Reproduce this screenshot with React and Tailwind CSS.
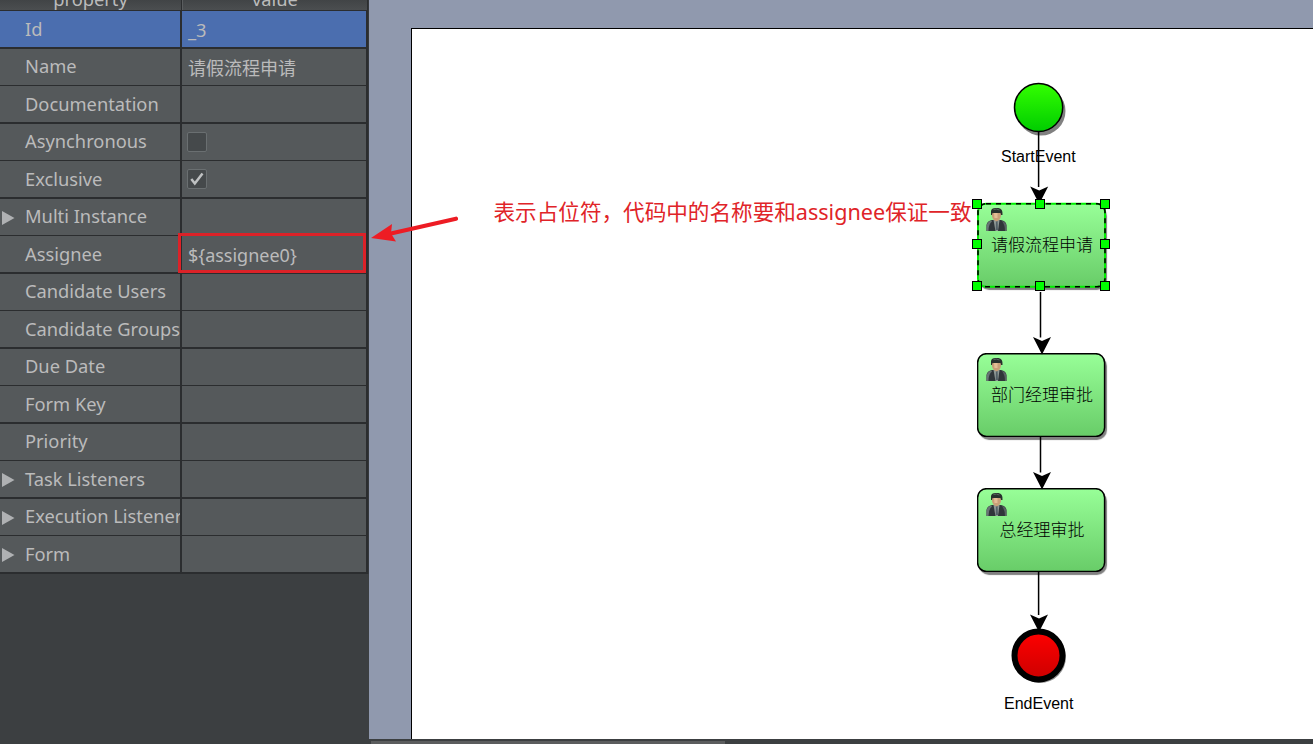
import React from "react";

const rows = [
  { label: "Id", value: "_3", selected: true },
  { label: "Name", value: "请假流程申请", cls: "text-[18px] pt-[3px] pl-[6px]" },
  { label: "Documentation" },
  { label: "Asynchronous", check: "off" },
  { label: "Exclusive", check: "on" },
  { label: "Multi Instance", expandable: true },
  { label: "Assignee", value: "${assignee0}", cls: "text-[18px] pt-[2px] pl-[6px]" },
  { label: "Candidate Users" },
  { label: "Candidate Groups" },
  { label: "Due Date" },
  { label: "Form Key" },
  { label: "Priority" },
  { label: "Task Listeners", expandable: true },
  { label: "Execution Listeners", expandable: true },
  { label: "Form", expandable: true },
];

function Check({ on }) {
  return (
    <span className="-ml-px flex h-5 w-5 items-center justify-center rounded-[2px] border border-[#6a6f71] bg-[#45494b]">
      {on && (
        <svg width="18" height="18" viewBox="0 0 18 18">
          <path d="M3.3 9 L6.8 13.5 L14.5 3.5" fill="none" stroke="#bfc1c2" strokeWidth="2.5" />
        </svg>
      )}
    </span>
  );
}

function Row({ row, index }) {
  const even = index % 2 === 0;
  const bg = row.selected ? "bg-[#4b6eaf]" : "bg-[#55595b]";
  const height = even ? "h-[38px] border-b-2" : "h-[37px] border-b";
  const valueCls = row.cls || (row.check ? (even ? "pb-px pl-[6px]" : "pb-px pl-[6px]") : "pt-[2px] pl-[6px]");
  return (
    <div className={`flex w-[366px] shrink-0 border-[#2b2d2f] ${bg} ${height}`}>
      <div
        className={`flex w-[182px] shrink-0 items-center overflow-hidden border-r-2 border-[#2b2d2f] ${
          even ? "pt-px" : "pb-px"
        }`}
      >
        <span className={`flex w-[25px] shrink-0 pl-[2px] ${even ? "pt-px" : "pt-[3px]"}`}>
          {row.expandable && (
            <svg width="13" height="14" viewBox="0 0 13 14">
              <path d="M0 0 L12.5 7 L0 14 Z" fill="#afb1b3" />
            </svg>
          )}
        </span>
        <span className="mb-[2px] whitespace-nowrap">{row.label}</span>
      </div>
      <div className={`flex flex-1 items-center ${valueCls}`}>
        {row.value && <span className="whitespace-nowrap">{row.value}</span>}
        {row.check && <Check on={row.check === "on"} />}
      </div>
    </div>
  );
}

function PropertyTable() {
  return (
    <div className="flex h-[744px] w-[369px] shrink-0 flex-col bg-[#3c3f41] font-['Noto_Sans','Noto_Sans_CJK_SC',sans-serif] text-[18.3px] text-[#bbbbbb]">
      <div className="flex h-[574px] flex-col border-r border-[#35383b] bg-[#2b2d2f]">
        <div className="flex h-[11px] w-[367px] shrink-0 items-end overflow-hidden border-b border-[#2b2d2f] bg-linear-to-b from-[#414446] to-[#4b4e50] leading-[22px]">
          <div className="flex w-[182px] justify-center border-r border-[#2b2d2f]">property</div>
          <div className="flex flex-1 justify-center border-l border-[#5a5d5f]">value</div>
        </div>
        {rows.map((row, i) => (
          <Row key={row.label} row={row} index={i} />
        ))}
      </div>
    </div>
  );
}

function UserIcon({ position }) {
  return (
    <svg className={`absolute ${position}`} width="22" height="25" viewBox="0 0 22 25">
      <path d="M0.5 24 V18 Q1 14 6 13 L15 13 Q20 14 20.5 18 V24 Z" fill="#30363a" />
      <path d="M0.5 20 Q0.5 15 5 13.5 L6 14.5 Q2.5 17 2.5 24 H0.5 Z" fill="#697475" />
      <path d="M16 14 Q20.5 15 20.5 20 V24 H19 Q19 18 16 14 Z" fill="#596263" />
      <path d="M7.5 13 H13.5 L12 24 H9.5 Z" fill="#8f9895" />
      <path d="M10 14 H11.5 L12 23 H9.7 Z" fill="#536067" />
      <path d="M6 6 H15 V9 Q14.5 13 10.5 14.5 Q6.5 13 6 9 Z" fill="#c99f78" />
      <path d="M8 6 H11.5 V11 H8.5 Z" fill="#e4bd95" />
      <path d="M5 8 V4 Q5.5 1 9.5 1 H12.5 Q17 1.5 16.5 8 L15 8 L14.5 6 H6.5 L6 8 Z" fill="#27302d" />
      <path d="M7.5 2.5 Q10.5 1.5 13.5 3" stroke="#59645d" fill="none" />
    </svg>
  );
}

function Task({ label, position, selected }) {
  return (
    <div
      className={`absolute left-[977px] flex h-[84px] w-[128px] items-center justify-center rounded-[10px] bg-linear-to-b from-[#98ff98] to-[#68cc68] pb-[3px] shadow-[2px_3px_1px_#808080] ${position}`}
    >
      {!selected && (
        <svg className="absolute inset-0" width="129" height="84">
          <rect x="0.6" y="0.7" width="127" height="82.8" rx="9" fill="none" stroke="#000" strokeWidth="1.5" />
        </svg>
      )}
      <UserIcon position="left-[9px] top-[4px]" />
      <span className="whitespace-nowrap pl-[2px] font-['Noto_Sans_CJK_SC',sans-serif] text-[17px] font-light leading-none text-black">
        {label}
      </span>
    </div>
  );
}

function Selection() {
  const points = [
    [977, 204], [1040, 204], [1105, 204],
    [977, 244], [1105, 244],
    [977, 286], [1040, 286], [1105, 286],
  ];
  return (
    <g>
      <rect x="978" y="203.7" width="127" height="83" rx="8" fill="none" stroke="#00f000" strokeWidth="2" />
      <rect x="978" y="203.7" width="127" height="83" rx="8" fill="none" stroke="#000" strokeWidth="1.6" strokeDasharray="5 5" />
      {points.map(([x, y]) => (
        <rect key={`${x}-${y}`} x={x - 4.5} y={y - 4.5} width="9" height="9" fill="#00ff00" stroke="#000" />
      ))}
    </g>
  );
}

function Arrow({ x, tipX, y1, y2 }) {
  return (
    <g>
      <path d={`M${x} ${y1} V${y2 - 16}`} stroke="#000" strokeWidth="1.5" />
      <path d={`M${tipX} ${y2 + 1} L${tipX - 9} ${y2 - 16.5} L${tipX} ${y2 - 12.5} L${tipX + 9} ${y2 - 16.5} Z`} fill="#000" />
    </g>
  );
}

function Canvas() {
  return (
    <div className="flex h-[744px] flex-1 flex-col bg-[#3c3f41]">
      <div className="flex h-[739px] bg-[#9099ae] pt-7 pl-[42px]">
        <div className="flex-1 border-t border-l border-black bg-white" />
      </div>
      <div className="flex flex-1 items-end pl-[2px]">
        <div className="h-[3px] w-[354px] bg-[#5b5d5e]" />
      </div>
    </div>
  );
}

function Diagram() {
  return (
    <>
      <Task label="请假流程申请" position="top-[203px]" selected />
      <Task label="部门经理审批" position="top-[353px]" />
      <Task label="总经理审批" position="top-[488px]" />
      <svg className="absolute inset-0" width="1313" height="744">
        <defs>
          <linearGradient id="start" x1="0" y1="0" x2="0" y2="1">
            <stop offset="0" stopColor="#33ff00" />
            <stop offset="1" stopColor="#00cc00" />
          </linearGradient>
          <linearGradient id="end" x1="0" y1="0" x2="0" y2="1">
            <stop offset="0" stopColor="#ff0000" />
            <stop offset="1" stopColor="#cc0000" />
          </linearGradient>
        </defs>
        <circle cx="1041" cy="111" r="24.5" fill="#808080" />
        <circle cx="1038.6" cy="107.5" r="24.1" fill="url(#start)" stroke="#000" strokeWidth="1.5" />
        <Arrow x={1038.6} tipX={1039.2} y1={132} y2={203} />
        <Arrow x={1040.5} tipX={1042} y1={292} y2={353.5} />
        <Arrow x={1040.5} tipX={1042} y1={437} y2={488.5} />
        <Arrow x={1038.6} tipX={1039} y1={572} y2={631} />
        <circle cx="1040" cy="657" r="26" fill="#909090" />
        <circle cx="1038.5" cy="655.5" r="24" fill="url(#end)" stroke="#000" strokeWidth="6" />
        <Selection />
        <path d="M456 218.7 L392 233.3" stroke="#ed1c24" strokeWidth="4.2" strokeLinecap="round" />
        <path d="M371 238 L392 224 L391 233.5 L396 241.5 Z" fill="#ed1c24" />
      </svg>
      <span className="absolute left-[1001px] top-[147px] font-['Liberation_Sans',sans-serif] text-[16px] leading-[20px] text-black">
        StartEvent
      </span>
      <span className="absolute left-[1004px] top-[694px] font-['Liberation_Sans',sans-serif] text-[16px] leading-[20px] text-black">
        EndEvent
      </span>
      <div className="absolute left-[178px] top-[233px] h-[40px] w-[188px] border-[3px] border-[#dc2228]" />
      <span className="absolute left-[493.5px] top-[199px] whitespace-nowrap font-['Noto_Sans','Noto_Sans_CJK_SC',sans-serif] text-[21.6px] leading-[26px] text-[#e02428]">
        表示占位符，代码中的名称要和assignee保证一致
      </span>
    </>
  );
}

export default function App() {
  return (
    <div className="relative flex h-[744px] w-[1313px] overflow-hidden">
      <PropertyTable />
      <Canvas />
      <Diagram />
    </div>
  );
}
